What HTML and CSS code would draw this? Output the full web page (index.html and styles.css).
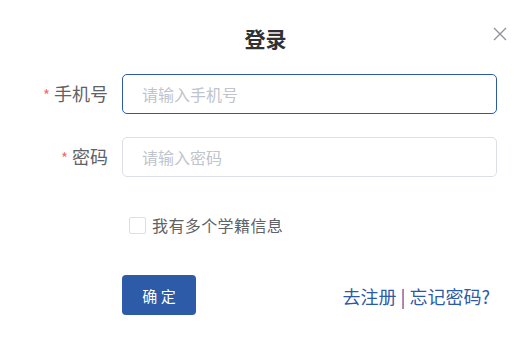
FILE: index.html
```html
<!DOCTYPE html>
<html lang="zh">
<head>
<meta charset="utf-8">
<title>登录</title>
<link rel="stylesheet" href="styles.css">
</head>
<body>
<div class="dialog">
  <div class="header">
    <span class="title">登录</span>
    <button class="close" aria-label="关闭">
      <svg width="14" height="14" viewBox="0 0 14 14"><path d="M1 1L13 13M13 1L1 13" stroke="#909399" stroke-width="1.4" fill="none"/></svg>
    </button>
  </div>
  <form class="form">
    <div class="row">
      <label class="label"><span class="star">*</span>手机号</label>
      <input class="input focus" type="text" placeholder="请输入手机号">
    </div>
    <div class="row">
      <label class="label"><span class="star">*</span>密码</label>
      <input class="input" type="password" placeholder="请输入密码">
    </div>
    <div class="row check-row">
      <label class="check"><span class="box"></span><span class="check-text">我有多个学籍信息</span></label>
    </div>
    <div class="row action-row">
      <button type="button" class="submit">确 定</button>
      <div class="links"><a>去注册</a> | <a>忘记密码?</a></div>
    </div>
  </form>
</div>
</body>
</html>
```
FILE: styles.css
```css
html, body {
  margin: 0;
  padding: 0;
  background: #fff;
}
body {
  font-family: "Noto Sans CJK SC", "Noto Sans", sans-serif;
  width: 531px;
  height: 358px;
  overflow: hidden;
}
.dialog {
  position: relative;
  padding: 20px 34px 0 0;
}
.header {
  display: flex;
  justify-content: center;
  height: 36px;
  padding-left: 34px;
}
.title {
  font-size: 21px;
  font-weight: 700;
  color: #303133;
  line-height: 36px;
}
.close {
  position: absolute;
  top: 27px;
  right: 24px;
  width: 14px;
  height: 14px;
  padding: 0;
  border: none;
  background: none;
  display: flex;
}
.form {
  margin-top: 18px;
  display: flex;
  flex-direction: column;
}
.row {
  display: flex;
  align-items: center;
  height: 40px;
  margin-bottom: 23px;
}
.label {
  width: 108px;
  padding-right: 14px;
  text-align: right;
  font-size: 18px;
  color: #606266;
  line-height: 40px;
}
.star {
  color: #f56c6c;
  margin-right: 4px;
  font-size: 15px;
}
.input {
  flex: 1;
  height: 40px;
  box-sizing: border-box;
  border: 1px solid #dcdfe6;
  border-radius: 5px;
  padding: 0 19px;
  font-family: inherit;
  font-size: 16px;
  color: #606266;
  outline: none;
  background: #fff;
}
.input::placeholder {
  color: #c0c4cc;
}
.input.focus {
  border-color: #2d5aa8;
}
.check-row {
  margin-top: 5px;
  margin-bottom: 30px;
  padding-left: 129px;
}
.check {
  display: flex;
  align-items: center;
  cursor: pointer;
}
.box {
  width: 15px;
  height: 15px;
  border: 1px solid #dcdfe6;
  border-radius: 2px;
  background: #fff;
}
.check-text {
  margin-left: 6px;
  font-size: 16px;
  letter-spacing: 0.4px;
  color: #606266;
}
.action-row {
  padding-left: 122px;
  justify-content: space-between;
}
.submit {
  width: 74px;
  height: 40px;
  border: none;
  border-radius: 4px;
  background: #2e5ba8;
  color: #fff;
  font-family: inherit;
  font-size: 15px;
  padding: 0;
}
.links {
  font-size: 18px;
  color: #2d5aa8;
  margin-right: 7px;
  margin-top: 2px;
}
.links a {
  color: #2d5aa8;
  cursor: pointer;
}
```
